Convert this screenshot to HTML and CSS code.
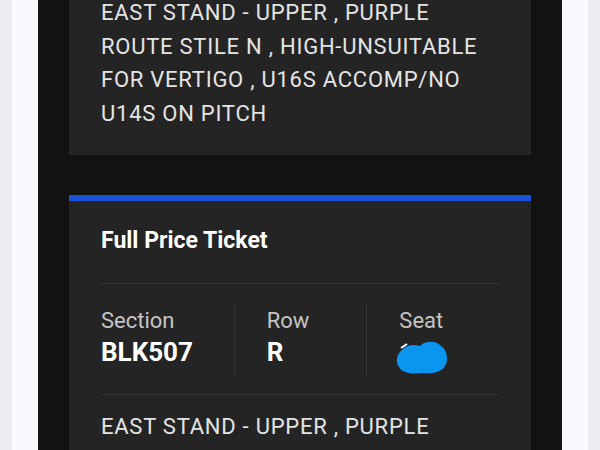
FILE: index.html
```html
<!DOCTYPE html>
<html lang="en">

<head>
    <meta charset="UTF-8">
    <meta name="viewport" content="width=device-width, initial-scale=1.0">
    <title>My Tickets</title>
    <link rel="stylesheet" href="styles.css">
</head>

<body>
    <div class="sheet">
        <div class="wallet">

            <!-- previous ticket, scrolled past its header -->
            <div class="ticket ticket-tail">
                <p class="info">EAST STAND - UPPER , PURPLE ROUTE STILE N , HIGH-UNSUITABLE FOR VERTIGO , U16S
                    ACCOMP/NO U14S ON PITCH</p>
            </div>

            <div class="ticket">
                <h2 class="ticket-type">Full Price Ticket</h2>
                <div class="seat-grid">
                    <div class="seat-col">
                        <span class="label">Section</span>
                        <span class="value">BLK507</span>
                    </div>
                    <div class="seat-col">
                        <span class="label">Row</span>
                        <span class="value">R</span>
                    </div>
                    <div class="seat-col">
                        <span class="label">Seat</span>
                        <span class="value">
                            <svg class="scribble" width="52" height="34" viewBox="0 0 52 34">
                                <path d="M6 10 C10 5 18 4 24 6 C30 0 41 1 45 6 C51 10 53 20 49 26 C45 33 34 34 26 33 C18 34 7 34 3 27 C-1 21 1 14 6 10 Z" fill="#0a95ef" />
                                <path d="M5 8 L11 4" stroke="#ffffff" stroke-width="2" />
                            </svg>
                        </span>
                    </div>
                </div>
                <p class="info">EAST STAND - UPPER , PURPLE ROUTE STILE N , HIGH-UNSUITABLE FOR VERTIGO , U16S
                    ACCOMP/NO U14S ON PITCH</p>
            </div>

        </div>
    </div>
</body>

</html>
```

FILE: styles.css
```css
body {
    margin: 0;
    padding: 0 12px;
    background-color: #ececf1;
    font-family: 'Roboto', 'Liberation Sans', sans-serif;
    overflow: hidden;
}

.sheet {
    padding: 0 26px;
    background-color: #f9f8fc;
    min-height: 450px;
}

.wallet {
    background-color: #121212;
    padding: 0 31px 40px;
    min-height: 450px;
}

.ticket {
    background-color: #242424;
    padding: 0 32px;
    border-top: 6px solid #1b50d8;
    margin-top: 40px;
}

.ticket-tail {
    border-top: none;
    margin-top: -20px;
}

.ticket-type {
    margin: 0;
    padding-top: 26px;
    padding-bottom: 28px;
    color: #ffffff;
    font-size: 23px;
    font-weight: 700;
    line-height: 28px;
}

.seat-grid {
    display: grid;
    grid-template-columns: 1fr 1fr 1fr;
    padding: 16px 0;
    border-top: 1px solid #333333;
    border-bottom: 1px solid #333333;
}

.seat-col {
    display: flex;
    flex-direction: column;
    padding: 6px 0 9px 32px;
    border-left: 1px solid #303030;
}

.seat-col:first-child {
    padding-left: 0;
    border-left: none;
}

.label {
    color: #c4c4c4;
    font-size: 22px;
    line-height: 30px;
}

.value {
    color: #ffffff;
    font-size: 26px;
    font-weight: 700;
    line-height: 33px;
    height: 33px;
}

.scribble {
    display: block;
    margin: 4px 0 0 -3px;
}

.info {
    margin: 0;
    padding: 15px 0 26px;
    color: #e4e4e4;
    font-size: 22px;
    line-height: 33.5px;
    letter-spacing: 0.75px;
}

.ticket-tail .info {
    padding: 16px 0 25px;
}
```
